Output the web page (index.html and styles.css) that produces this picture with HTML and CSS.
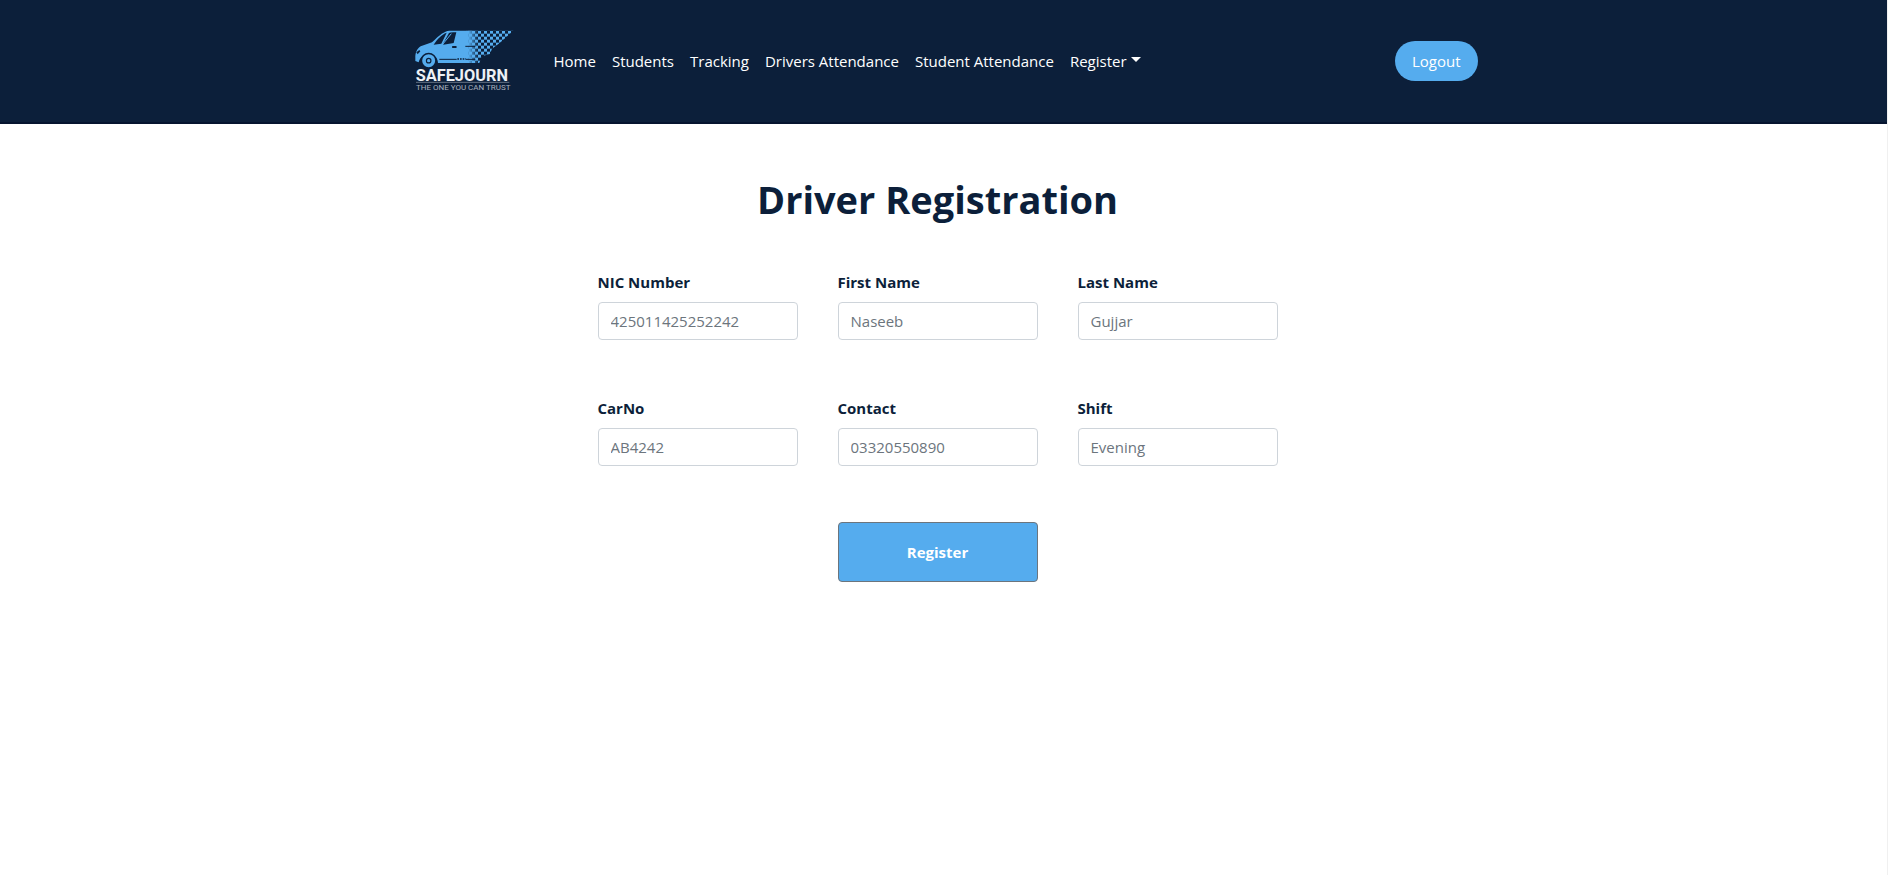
FILE: index.html
```html
<!DOCTYPE html>
<html lang="en">
<head>
<meta charset="utf-8">
<meta name="viewport" content="width=device-width, initial-scale=1">
<title>Driver Registration</title>
<link rel="stylesheet" href="styles.css">
</head>
<body>
<header class="header">
  <div class="header-inner">
    <a class="brand" href="#">
      <svg class="logo" viewBox="42 30 306 192" role="img" aria-label="Safejourn">
        <defs>
          <pattern id="checks" width="18" height="18" x="198" y="35" patternUnits="userSpaceOnUse">
            <rect width="9" height="9" fill="#55acee"/>
            <rect x="9" y="9" width="9" height="9" fill="#55acee"/>
          </pattern>
          <linearGradient id="fade">
            <stop offset="0" stop-color="#55acee"/>
            <stop offset="1" stop-color="#55acee" stop-opacity="0"/>
          </linearGradient>
        </defs>
        <path fill="#55acee" d="M206 35H148C132 37 120 46 96 70L62 82C50 90 46 103 46 116V126L56 130C60 112 74 103 88 104C104 106 114 118 114 132H206Z"/>
        <path fill="url(#checks)" d="M198 35H340L320 53L300 71L276 89L270 105L245 112L238 132H198Z"/>
        <path fill="url(#fade)" d="M205 35H236V132H205Z"/>
        <path fill="#0c1f3a" d="M101 77C112 60 124 47 140 41L124 74ZM130 73L147 42Q151 39 169 40L161 72L130 77Z"/>
        <path fill="none" stroke="#55acee" stroke-width="3" d="M128 76L154 44"/>
        <path fill="none" stroke="#0c1f3a" stroke-width="3" d="M196 82H226M118 121H170M198 121H226"/>
        <path fill="none" stroke="#0c1f3a" stroke-width="4" stroke-dasharray="5 3" d="M172 120H198"/>
        <rect x="156" y="81" width="14" height="6" rx="2" fill="#0c1f3a"/>
        <path fill="#0c1f3a" d="M49 100L58 93L61 97L53 106Z"/>
        <circle cx="86" cy="125" r="24" fill="#0c1f3a"/>
        <circle cx="86" cy="125" r="14" fill="#0c1f3a" stroke="#55acee" stroke-width="11"/>
        <circle cx="86" cy="125" r="5" fill="#55acee"/>
        <text class="logo-name" x="47" y="186">SAFEJOURN</text>
        <path stroke="#8e98a8" stroke-width="2" d="M48 190H328"/>
        <text class="logo-tagline" x="48" y="213">THE ONE YOU CAN TRUST</text>
      </svg>
    </a>
    <nav class="nav">
      <a class="nav-link" href="#">Home</a>
      <a class="nav-link" href="#">Students</a>
      <a class="nav-link" href="#">Tracking</a>
      <a class="nav-link" href="#">Drivers Attendance</a>
      <a class="nav-link" href="#">Student Attendance</a>
      <a class="nav-link dropdown" href="#">Register</a>
    </nav>
    <button class="logout" type="button">Logout</button>
  </div>
</header>
<main class="main">
  <h1 class="title">Driver Registration</h1>
  <form class="form">
    <div class="field">
      <label class="label" for="nic">NIC Number</label>
      <input class="input" id="nic" type="text" placeholder="425011425252242">
    </div>
    <div class="field">
      <label class="label" for="first">First Name</label>
      <input class="input" id="first" type="text" placeholder="Naseeb">
    </div>
    <div class="field">
      <label class="label" for="last">Last Name</label>
      <input class="input" id="last" type="text" placeholder="Gujjar">
    </div>
    <div class="field">
      <label class="label" for="car">CarNo</label>
      <input class="input" id="car" type="text" placeholder="AB4242">
    </div>
    <div class="field">
      <label class="label" for="contact">Contact</label>
      <input class="input" id="contact" type="text" placeholder="03320550890">
    </div>
    <div class="field">
      <label class="label" for="shift">Shift</label>
      <input class="input" id="shift" type="text" placeholder="Evening">
    </div>
    <button class="submit" type="submit">Register</button>
  </form>
</main>
</body>
</html>
```
FILE: styles.css
```css
* { box-sizing: border-box; }

body {
  margin: 0;
  min-height: 100vh;
  border-right: 1px solid #f0f0f0;
  background: #fff;
  color: #0c1f3a;
  font-family: "Segoe UI", "Open Sans", "Noto Sans", sans-serif;
  font-size: 15px;
  line-height: 24px;
}

.header {
  padding: 29px 16px;
  border-bottom: 2px solid #06142f;
  background: #0c1f3a;
}

.header-inner {
  display: flex;
  align-items: center;
  max-width: 1068px;
  margin: 0 auto;
}

.brand { display: flex; padding-left: 4px; }

.logo { width: 102px; height: 64px; }

.logo-name {
  fill: #eef1f5;
  font: 700 49px Roboto, sans-serif;
}

.logo-tagline {
  fill: #a9b1be;
  font: 400 24px Roboto, sans-serif;
}

.nav {
  display: flex;
  flex: 1;
  margin-left: 30px;
}

.nav-link {
  padding: 8px;
  color: #fff;
  text-decoration: none;
  white-space: nowrap;
}

.dropdown {
  display: flex;
  align-items: center;
  gap: 4px;
}

.dropdown::after {
  content: "";
  margin-bottom: 4px;
  border: 5px solid transparent;
  border-top-color: #fff;
  border-bottom: 0;
}

.logout {
  padding: 8px 17px;
  border: 0;
  border-radius: 20px;
  background: #55acee;
  color: #fff;
  font: inherit;
}

.main { padding: 48px 28px 48px 16px; }

.title {
  margin: 0 0 44px;
  font-size: 38px;
  line-height: 54px;
  text-align: center;
}

.form {
  display: grid;
  grid-template-columns: repeat(3, 1fr);
  column-gap: 40px;
  row-gap: 56px;
  max-width: 680px;
  margin: 0 auto;
}

.field {
  display: flex;
  flex-direction: column;
  gap: 8px;
}

.label { font-weight: 700; }

.input {
  width: 100%;
  height: 38px;
  padding: 6px 12px;
  border: 1px solid #ced4da;
  border-radius: 4px;
  background: #fff;
  color: #212529;
  font: inherit;
}

.input::placeholder { color: #6c757d; opacity: 1; }

.submit {
  grid-column: 2;
  height: 60px;
  border: 1px solid #6c757d;
  border-radius: 4px;
  background: #55acee;
  color: #fff;
  font: inherit;
  font-weight: 700;
}
```
